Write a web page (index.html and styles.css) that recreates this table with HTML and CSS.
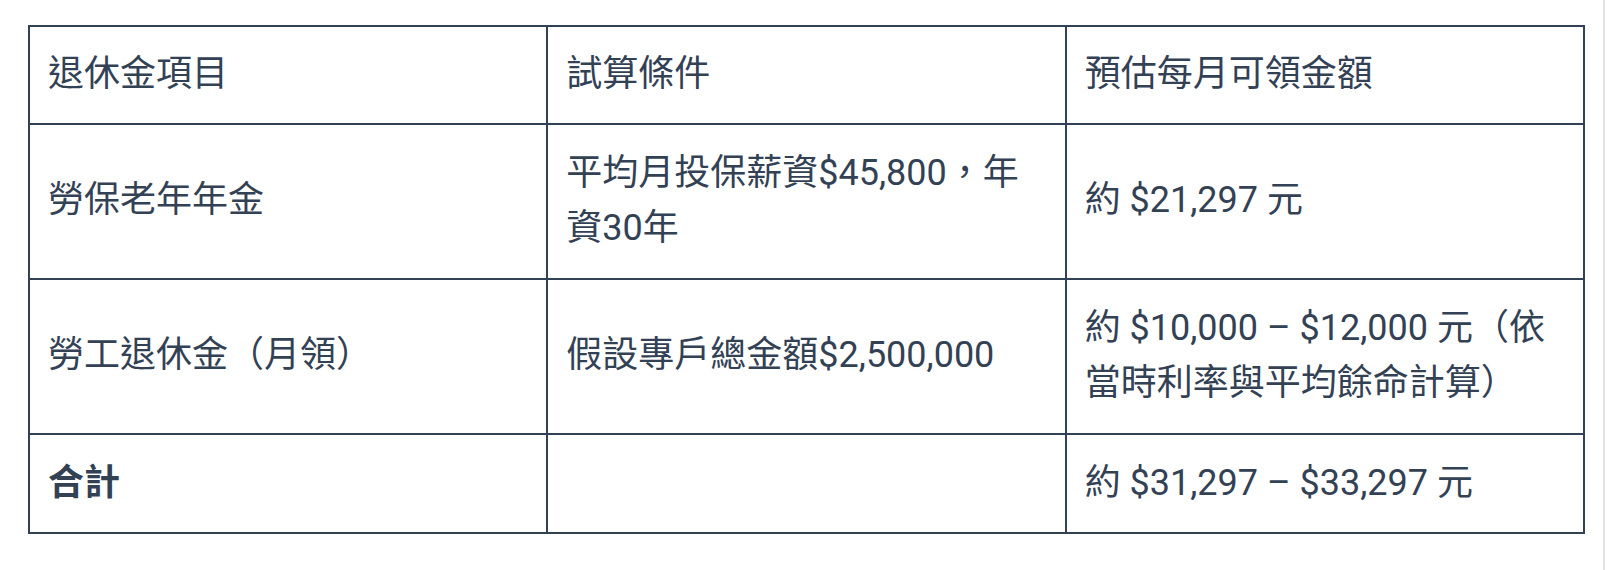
FILE: index.html
```
<!DOCTYPE html>
<html lang="zh-Hant">
<head>
<meta charset="utf-8">
<title>退休金試算</title>
<link rel="stylesheet" href="styles.css">
</head>
<body>
<div class="page">
  <table class="pension">
    <thead>
      <tr>
        <th>退休金項目</th>
        <th>試算條件</th>
        <th>預估每月可領金額</th>
      </tr>
    </thead>
    <tbody>
      <tr>
        <td>勞保老年年金</td>
        <td>平均月投保薪資$45,800，年資30年</td>
        <td>約 $21,297 元</td>
      </tr>
      <tr>
        <td>勞工退休金（月領）</td>
        <td>假設專戶總金額$2,500,000</td>
        <td>約 $10,000 – $12,000 元（依當時利率與平均餘命計算）</td>
      </tr>
      <tr>
        <td class="total">合計</td>
        <td></td>
        <td>約 $31,297 – $33,297 元</td>
      </tr>
    </tbody>
  </table>
</div>
<div class="scroll-edge"></div>
</body>
</html>
```
FILE: styles.css
```
html, body {
  margin: 0;
  padding: 0;
  background: #ffffff;
}
.page {
  padding: 25px 0 0 28px;
}
.pension {
  width: 1557px;
  table-layout: fixed;
  border-collapse: collapse;
  font-family: Roboto, "Noto Sans CJK TC", sans-serif;
  font-size: 36px;
  line-height: 55.5px;
  color: #334155;
}
.pension th,
.pension td {
  border: 2px solid #334155;
  padding: 21px 18px;
  text-align: left;
  vertical-align: middle;
  font-weight: 400;
}
.pension th {
  padding-top: 20px;
  padding-bottom: 20px;
}
.pension td.total {
  font-weight: 700;
}
.scroll-edge {
  position: fixed;
  top: 0;
  right: 3px;
  width: 2px;
  height: 100%;
  background: #e3e3e3;
}
```
